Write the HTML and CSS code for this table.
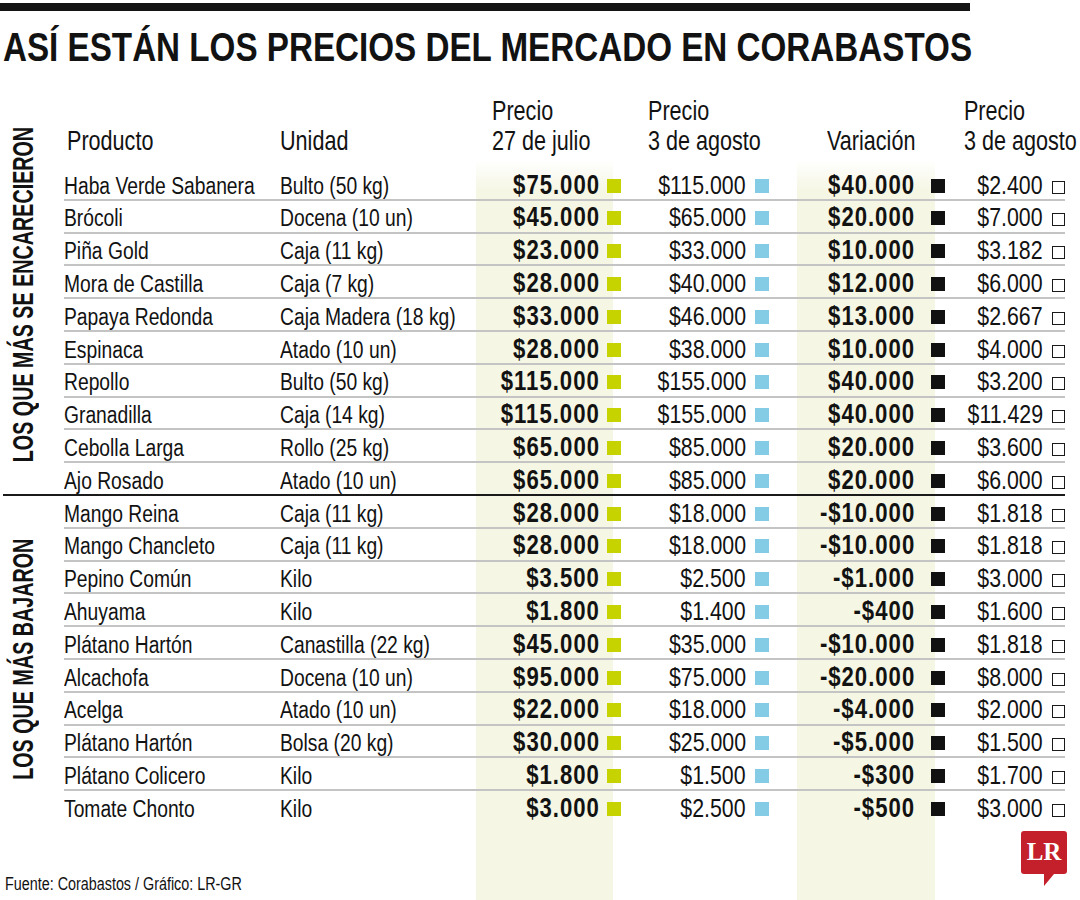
FILE: index.html
```html
<!DOCTYPE html>
<html lang="es">
<head>
<meta charset="utf-8">
<title>Así están los precios del mercado en Corabastos</title>
<link rel="stylesheet" href="styles.css">
</head>
<body>
<div class="topbar"></div>
<h1 class="title">ASÍ ESTÁN LOS PRECIOS DEL MERCADO EN CORABASTOS</h1>
<main class="sheet">
  <section class="group up">
    <div class="label">LOS QUE MÁS SE ENCARECIERON</div>
    <div class="head">
      <div class="h1">Producto</div>
      <div class="h2">Unidad</div>
      <div class="h3">Precio<br>27 de julio</div>
      <div class="h4">Precio<br>3 de agosto</div>
      <div class="h5">Variación</div>
      <div class="h6">Precio<br>3 de agosto</div>
    </div>
    <div class="rows">
      <div class="row"><span class="t">Haba Verde Sabanera</span><span class="t">Bulto (50 kg)</span><span class="v g"><b>$75.000</b><i class="sq"></i></span><span class="v b"><span>$115.000</span><i class="sq"></i></span><span class="v k"><b>$40.000</b><i class="sq"></i></span><span class="v o"><span>$2.400</span><i class="sq"></i></span></div>
      <div class="row"><span class="t">Brócoli</span><span class="t">Docena (10 un)</span><span class="v g"><b>$45.000</b><i class="sq"></i></span><span class="v b"><span>$65.000</span><i class="sq"></i></span><span class="v k"><b>$20.000</b><i class="sq"></i></span><span class="v o"><span>$7.000</span><i class="sq"></i></span></div>
      <div class="row"><span class="t">Piña Gold</span><span class="t">Caja (11 kg)</span><span class="v g"><b>$23.000</b><i class="sq"></i></span><span class="v b"><span>$33.000</span><i class="sq"></i></span><span class="v k"><b>$10.000</b><i class="sq"></i></span><span class="v o"><span>$3.182</span><i class="sq"></i></span></div>
      <div class="row"><span class="t">Mora de Castilla</span><span class="t">Caja (7 kg)</span><span class="v g"><b>$28.000</b><i class="sq"></i></span><span class="v b"><span>$40.000</span><i class="sq"></i></span><span class="v k"><b>$12.000</b><i class="sq"></i></span><span class="v o"><span>$6.000</span><i class="sq"></i></span></div>
      <div class="row"><span class="t">Papaya Redonda</span><span class="t">Caja Madera (18 kg)</span><span class="v g"><b>$33.000</b><i class="sq"></i></span><span class="v b"><span>$46.000</span><i class="sq"></i></span><span class="v k"><b>$13.000</b><i class="sq"></i></span><span class="v o"><span>$2.667</span><i class="sq"></i></span></div>
      <div class="row"><span class="t">Espinaca</span><span class="t">Atado (10 un)</span><span class="v g"><b>$28.000</b><i class="sq"></i></span><span class="v b"><span>$38.000</span><i class="sq"></i></span><span class="v k"><b>$10.000</b><i class="sq"></i></span><span class="v o"><span>$4.000</span><i class="sq"></i></span></div>
      <div class="row"><span class="t">Repollo</span><span class="t">Bulto (50 kg)</span><span class="v g"><b>$115.000</b><i class="sq"></i></span><span class="v b"><span>$155.000</span><i class="sq"></i></span><span class="v k"><b>$40.000</b><i class="sq"></i></span><span class="v o"><span>$3.200</span><i class="sq"></i></span></div>
      <div class="row"><span class="t">Granadilla</span><span class="t">Caja (14 kg)</span><span class="v g"><b>$115.000</b><i class="sq"></i></span><span class="v b"><span>$155.000</span><i class="sq"></i></span><span class="v k"><b>$40.000</b><i class="sq"></i></span><span class="v o"><span>$11.429</span><i class="sq"></i></span></div>
      <div class="row"><span class="t">Cebolla Larga</span><span class="t">Rollo (25 kg)</span><span class="v g"><b>$65.000</b><i class="sq"></i></span><span class="v b"><span>$85.000</span><i class="sq"></i></span><span class="v k"><b>$20.000</b><i class="sq"></i></span><span class="v o"><span>$3.600</span><i class="sq"></i></span></div>
      <div class="row"><span class="t">Ajo Rosado</span><span class="t">Atado (10 un)</span><span class="v g"><b>$65.000</b><i class="sq"></i></span><span class="v b"><span>$85.000</span><i class="sq"></i></span><span class="v k"><b>$20.000</b><i class="sq"></i></span><span class="v o"><span>$6.000</span><i class="sq"></i></span></div>
    </div>
  </section>
  <section class="group down">
    <div class="label">LOS QUE MÁS BAJARON</div>
    <div class="rows">
      <div class="row"><span class="t">Mango Reina</span><span class="t">Caja (11 kg)</span><span class="v g"><b>$28.000</b><i class="sq"></i></span><span class="v b"><span>$18.000</span><i class="sq"></i></span><span class="v k"><b>-$10.000</b><i class="sq"></i></span><span class="v o"><span>$1.818</span><i class="sq"></i></span></div>
      <div class="row"><span class="t">Mango Chancleto</span><span class="t">Caja (11 kg)</span><span class="v g"><b>$28.000</b><i class="sq"></i></span><span class="v b"><span>$18.000</span><i class="sq"></i></span><span class="v k"><b>-$10.000</b><i class="sq"></i></span><span class="v o"><span>$1.818</span><i class="sq"></i></span></div>
      <div class="row"><span class="t">Pepino Común</span><span class="t">Kilo</span><span class="v g"><b>$3.500</b><i class="sq"></i></span><span class="v b"><span>$2.500</span><i class="sq"></i></span><span class="v k"><b>-$1.000</b><i class="sq"></i></span><span class="v o"><span>$3.000</span><i class="sq"></i></span></div>
      <div class="row"><span class="t">Ahuyama</span><span class="t">Kilo</span><span class="v g"><b>$1.800</b><i class="sq"></i></span><span class="v b"><span>$1.400</span><i class="sq"></i></span><span class="v k"><b>-$400</b><i class="sq"></i></span><span class="v o"><span>$1.600</span><i class="sq"></i></span></div>
      <div class="row"><span class="t">Plátano Hartón</span><span class="t">Canastilla (22 kg)</span><span class="v g"><b>$45.000</b><i class="sq"></i></span><span class="v b"><span>$35.000</span><i class="sq"></i></span><span class="v k"><b>-$10.000</b><i class="sq"></i></span><span class="v o"><span>$1.818</span><i class="sq"></i></span></div>
      <div class="row"><span class="t">Alcachofa</span><span class="t">Docena (10 un)</span><span class="v g"><b>$95.000</b><i class="sq"></i></span><span class="v b"><span>$75.000</span><i class="sq"></i></span><span class="v k"><b>-$20.000</b><i class="sq"></i></span><span class="v o"><span>$8.000</span><i class="sq"></i></span></div>
      <div class="row"><span class="t">Acelga</span><span class="t">Atado (10 un)</span><span class="v g"><b>$22.000</b><i class="sq"></i></span><span class="v b"><span>$18.000</span><i class="sq"></i></span><span class="v k"><b>-$4.000</b><i class="sq"></i></span><span class="v o"><span>$2.000</span><i class="sq"></i></span></div>
      <div class="row"><span class="t">Plátano Hartón</span><span class="t">Bolsa (20 kg)</span><span class="v g"><b>$30.000</b><i class="sq"></i></span><span class="v b"><span>$25.000</span><i class="sq"></i></span><span class="v k"><b>-$5.000</b><i class="sq"></i></span><span class="v o"><span>$1.500</span><i class="sq"></i></span></div>
      <div class="row"><span class="t">Plátano Colicero</span><span class="t">Kilo</span><span class="v g"><b>$1.800</b><i class="sq"></i></span><span class="v b"><span>$1.500</span><i class="sq"></i></span><span class="v k"><b>-$300</b><i class="sq"></i></span><span class="v o"><span>$1.700</span><i class="sq"></i></span></div>
      <div class="row"><span class="t">Tomate Chonto</span><span class="t">Kilo</span><span class="v g"><b>$3.000</b><i class="sq"></i></span><span class="v b"><span>$2.500</span><i class="sq"></i></span><span class="v k"><b>-$500</b><i class="sq"></i></span><span class="v o"><span>$3.000</span><i class="sq"></i></span></div>
    </div>
  </section>
  <footer class="foot">
    <p class="source">Fuente: Corabastos / Gráfico: LR-GR</p>
    <svg class="logo" width="46" height="56" viewBox="0 0 46 56" aria-label="LR">
      <path d="M3 0H43A3 3 0 0 1 46 3V40A3 3 0 0 1 43 43H33L23 55V43H3A3 3 0 0 1 0 40V3A3 3 0 0 1 3 0Z" fill="#c4202b"/>
      <text x="23" y="29" text-anchor="middle" font-family="Liberation Serif, serif" font-weight="700" font-size="25" fill="#fff">LR</text>
    </svg>
  </footer>
</main>
</body>
</html>
```

FILE: styles.css
```css
html, body {
  margin: 0;
  padding: 0;
}

body {
  width: 1080px;
  height: 900px;
  overflow: hidden;
  display: flex;
  flex-direction: column;
  background: #fff;
  color: #121212;
  font-family: "Liberation Sans", Arial, sans-serif;
}

.topbar {
  flex: none;
  margin-top: 3px;
  width: 970px;
  height: 8px;
  background: #141414;
}

/* condensed lettering: Liberation Sans narrowed to Arial Narrow proportions */
.title {
  flex: none;
  width: 970px;
  margin: 16px 0 0 3px;
  font-size: 40px;
  line-height: 40px;
  font-weight: 700;
  white-space: nowrap;
  transform: scaleX(0.83);
  transform-origin: 0 50%;
}

.sheet {
  flex: 1;
  margin-top: 28.5px;
  display: flex;
  flex-direction: column;
  background:
    linear-gradient(180deg, #fff 0, #fff 64px, rgba(255, 255, 255, 0) 96px),
    linear-gradient(90deg,
      transparent 0 476px,
      #f5f6e3 476px 613px,
      transparent 613px 797px,
      #f5f6e3 797px 935px,
      transparent 935px);
}

.group {
  display: grid;
  grid-template-columns: 61px 1001px;
  margin-left: 3px;
  width: 1062px;
}

.group.up {
  border-bottom: 2px solid #1a1a1a;
}

.label {
  grid-column: 1;
  grid-row: 1 / span 2;
  align-self: center;
  justify-self: start;
  margin: -50px 0 -50px 6px;
  writing-mode: vertical-rl;
  transform: rotate(180deg) scaleY(0.68);
  font-size: 29px;
  line-height: 29px;
  font-weight: 700;
  white-space: nowrap;
}

.group.down .label {
  grid-row: 1;
}

.head {
  grid-column: 2;
  grid-row: 1;
  display: grid;
  grid-template-columns: 216px 196px 145px 148px 176px 120px;
  align-items: end;
  margin-bottom: 11.5px;
  font-size: 27.5px;
  line-height: 30.5px;
  white-space: nowrap;
}

.head > div {
  transform: scaleX(0.785);
  transform-origin: 0 50%;
}

.head .h1 { margin-left: 3px; }
.head .h3 { margin-left: 16px; }
.head .h4 { margin-left: 27px; }
.head .h5 { margin-left: 58px; }

/* last header hugs the right edge so its narrowed text starts at x = 964 */
.head .h6 {
  width: max-content;
  justify-self: end;
  margin-right: -12px;
  transform-origin: 100% 50%;
}

.rows {
  grid-column: 2;
}

.group.up .rows {
  grid-row: 2;
}

.group.down .rows {
  grid-row: 1;
}

.row {
  display: grid;
  grid-template-columns: 216px 196px 145px 148px 176px 120px;
  align-items: baseline;
  box-sizing: border-box;
  height: 32.8px;
  padding-top: 3.7px;
  border-bottom: 2px solid #c4c4c4;
  line-height: 26px;
  white-space: nowrap;
}

.row:last-child {
  border-bottom: 0;
  height: 30.8px;
}

.t {
  font-size: 23.5px;
  transform: scaleX(0.82);
  transform-origin: 0 50%;
}

.v {
  text-align: right;
  font-size: 26px;
}

.v > b,
.v > span {
  display: inline-block;
  transform: scaleX(0.82);
  transform-origin: 100% 50%;
}

.v > b {
  font-weight: 700;
  font-size: 27px;
  letter-spacing: 1.2px;
}

.sq {
  display: inline-block;
  width: 14px;
  height: 14px;
  vertical-align: baseline;
  margin-bottom: 1px;
  box-sizing: border-box;
}

.v.g .sq { background: #c6d300; margin-left: 7px; }
.v.b .sq { background: #84cbe5; margin-left: 9px; }
.v.k .sq { background: #111; margin-left: 16px; }
.v.o .sq {
  width: 13px;
  height: 13px;
  margin-left: 9px;
  margin-bottom: 0;
  border: 1.5px solid #1a1a1a;
  background: #fff;
}

.foot {
  margin-top: auto;
  display: flex;
  justify-content: space-between;
  align-items: flex-end;
  padding: 0 13px 0 5px;
}

.source {
  margin: 0 0 6px 0;
  font-size: 17.5px;
  line-height: 20px;
  white-space: nowrap;
  transform: scaleX(0.82);
  transform-origin: 0 50%;
}

.logo {
  display: block;
  margin-bottom: 13px;
}
```
